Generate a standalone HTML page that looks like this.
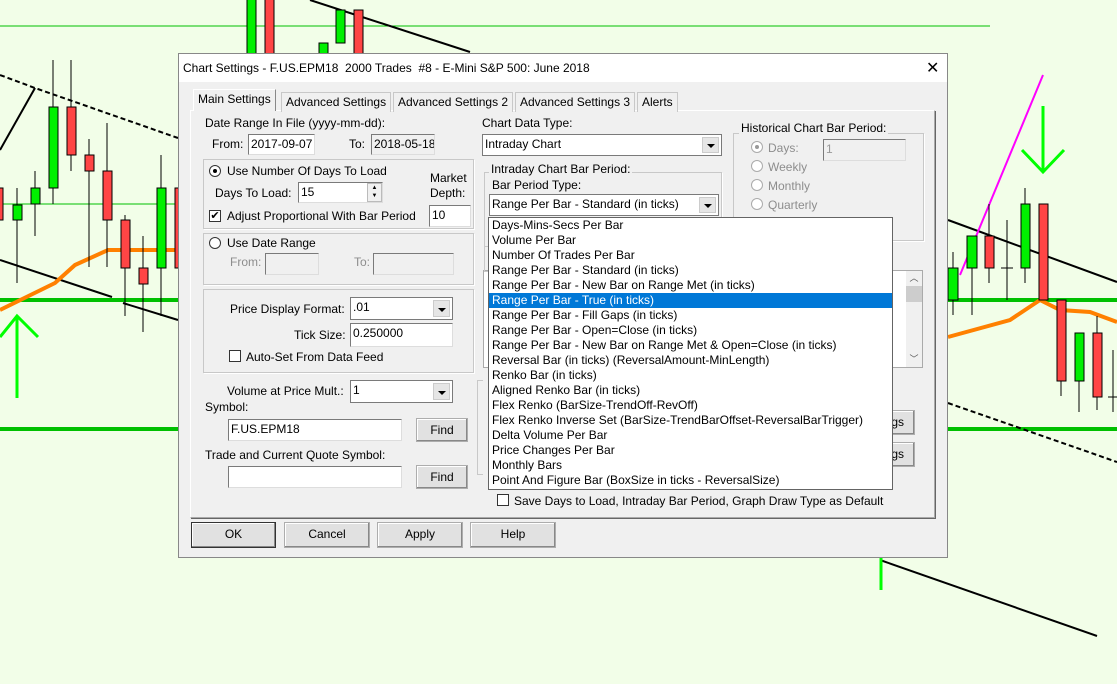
<!DOCTYPE html>
<html><head><meta charset="utf-8"><style>
*{box-sizing:border-box;margin:0;padding:0}
body{width:1117px;height:684px;overflow:hidden;background:#f2fee8;font-family:"Liberation Sans",sans-serif;font-size:12px;color:#000;position:relative}
.a{position:absolute;white-space:nowrap}
.dlg{position:absolute;left:178px;top:53px;width:770px;height:505px;background:#f0f0f0;border:1px solid #888}
.tb{position:absolute;left:0;top:0;width:768px;height:28px;background:#fff}
.in{position:absolute;background:#fff;border:1px solid #7a7a7a;border-right-color:#ddd;border-bottom-color:#ddd;padding:2px 2px;line-height:15px;white-space:nowrap;overflow:hidden}
.gr{background:#f0f0f0}
.grp{position:absolute;border:1px solid #c8c8c8;box-shadow:1px 1px 0 #fff}
.btn{position:absolute;background:#e1e1e1;border:1px solid #adadad;box-shadow:inset -1px -1px 0 #888, inset 1px 1px 0 #fff;text-align:center;line-height:22px}
.sel{position:absolute;background:#fff;border:1px solid #7a7a7a;padding:2px;line-height:15px;white-space:nowrap}
.sel:after{content:"";position:absolute;right:2px;top:2px;width:15px;bottom:2px;background:#e6e6e6;border:1px solid #ccc}
.sel i{position:absolute;right:6px;top:50%;margin-top:-1px;border:4px solid transparent;border-top:4px solid #000;z-index:2}
.rad{position:absolute;width:12px;height:12px;border-radius:50%;border:1px solid #333;background:#fff}
.cb{position:absolute;width:12px;height:12px;border:1px solid #333;background:#fff;font-size:11px;line-height:10px;text-align:center}
.dis{color:#8d8d8d}
.tab{position:absolute;border:1px solid #c8c8c8;border-bottom:none;height:20px;line-height:19px;padding:0 4px;background:#f0f0f0;white-space:nowrap}
.list{position:absolute;left:488px;top:217px;width:405px;height:273px;background:#fff;border:1px solid #646464}
.list div{height:15px;line-height:15px;padding-left:3px;white-space:nowrap}
.list .s{background:#0078d7;color:#fff}
</style></head><body>
<svg class="a" style="left:0;top:0" width="1117" height="684">
<g stroke="#00c000" fill="none">
<line x1="0" y1="26" x2="990" y2="26" stroke-width="1"/>
<line x1="0" y1="204" x2="180" y2="204" stroke-width="1"/>
<line x1="0" y1="300" x2="1117" y2="300" stroke-width="4"/>
<line x1="0" y1="429" x2="180" y2="429" stroke-width="4"/>
<line x1="848" y1="429" x2="1117" y2="429" stroke-width="4"/>
</g>
<g stroke="#000" stroke-width="2" fill="none">
<polyline points="0,150 35,88"/>
<polyline points="0,75 35,88 178,138" stroke-dasharray="5,3"/>
<line x1="0" y1="260" x2="112" y2="297"/>
<line x1="123" y1="303" x2="178" y2="320"/>
<line x1="310" y1="0" x2="470" y2="52"/>
<line x1="948" y1="220" x2="1117" y2="282"/>
<line x1="948" y1="403" x2="1117" y2="462" stroke-dasharray="5,3"/>
<line x1="880" y1="560" x2="1097" y2="636"/>
</g>
<line x1="960" y1="275" x2="1043" y2="75" stroke="#f0f" stroke-width="2"/>
<polyline points="0,310 55,283 75,265 108,250 178,250" stroke="#ff8000" stroke-width="4" fill="none"/>
<polyline points="948,337 1010,320 1040,300 1060,310 1090,312 1117,322" stroke="#ff8000" stroke-width="4" fill="none"/>
<g stroke="#00ff00" stroke-width="3" fill="none">
<polyline points="0,337 17,316 38,337"/><line x1="17" y1="316" x2="17" y2="398"/>
<polyline points="1022,150 1043,172 1064,150"/><line x1="1043" y1="106" x2="1043" y2="172"/>
<line x1="881" y1="558" x2="881" y2="590"/>
</g>
<g stroke="#000" stroke-width="1">
<line x1="17" y1="188" x2="17" y2="283"/><line x1="35" y1="171" x2="35" y2="236"/><line x1="53" y1="60" x2="53" y2="204"/><line x1="71" y1="60" x2="71" y2="171"/><line x1="89" y1="139" x2="89" y2="267"/><line x1="107" y1="123" x2="107" y2="267"/><line x1="125" y1="215" x2="125" y2="316"/><line x1="143" y1="236" x2="143" y2="332"/><line x1="161" y1="155" x2="161" y2="316"/>
<line x1="953" y1="252" x2="953" y2="315"/><line x1="972" y1="236" x2="972" y2="315"/><line x1="989" y1="204" x2="989" y2="283"/><line x1="1007" y1="220" x2="1007" y2="300"/><line x1="1001" y1="268" x2="1013" y2="268"/><line x1="1025" y1="188" x2="1025" y2="283"/><line x1="1061" y1="300" x2="1061" y2="396"/><line x1="1079" y1="333" x2="1079" y2="412"/><line x1="1097" y1="316" x2="1097" y2="410"/><line x1="1113" y1="350" x2="1113" y2="412"/><line x1="1108" y1="397" x2="1117" y2="397"/>
</g>
<g stroke="#000" stroke-width="1">
<rect x="-2" y="188" width="5" height="32" fill="#ff4545"/>
<rect x="13" y="205" width="9" height="15" fill="#00f000"/>
<rect x="31" y="188" width="9" height="16" fill="#00f000"/>
<rect x="49" y="107" width="9" height="81" fill="#00f000"/>
<rect x="67" y="107" width="9" height="48" fill="#ff4545"/>
<rect x="85" y="155" width="9" height="16" fill="#ff4545"/>
<rect x="103" y="171" width="9" height="49" fill="#ff4545"/>
<rect x="121" y="220" width="9" height="48" fill="#ff4545"/>
<rect x="139" y="268" width="9" height="16" fill="#ff4545"/>
<rect x="157" y="188" width="9" height="80" fill="#00f000"/>
<rect x="175" y="188" width="9" height="80" fill="#ff4545"/>
<rect x="247" y="-2" width="9" height="57" fill="#00f000"/>
<rect x="265" y="-2" width="9" height="57" fill="#ff4545"/>
<rect x="319" y="43" width="9" height="17" fill="#00f000"/>
<rect x="336" y="10" width="9" height="33" fill="#00f000"/>
<rect x="354" y="10" width="9" height="45" fill="#ff4545"/>
<rect x="948" y="268" width="10" height="32" fill="#00f000"/>
<rect x="967" y="236" width="10" height="32" fill="#00f000"/>
<rect x="985" y="236" width="9" height="32" fill="#ff4545"/>
<rect x="1021" y="204" width="9" height="64" fill="#00f000"/>
<rect x="1039" y="204" width="9" height="96" fill="#ff4545"/>
<rect x="1057" y="300" width="9" height="81" fill="#ff4545"/>
<rect x="1075" y="333" width="9" height="48" fill="#00f000"/>
<rect x="1093" y="333" width="9" height="64" fill="#ff4545"/>
</g>
</svg>

<div class="dlg">
<div class="tb"></div>
<div class="a" style="left:4px;top:7px">Chart Settings - F.US.EPM18&nbsp; 2000 Trades&nbsp; #8 - E-Mini S&amp;P 500: June 2018</div>
<div class="a" style="left:747px;top:4px;font-size:16px">✕</div>
</div>
<div class="a" style="left:190px;top:110px;width:745px;height:408px;border:1px solid #aaa;border-top-color:#fff;border-left-color:#fff;box-shadow:1px 1px 0 #666"></div>
<div class="tab" style="left:193px;top:89px;height:22px;z-index:2;border-color:#fff #888 #f0f0f0 #fff;border-width:1px">Main Settings</div>
<div class="tab" style="left:281px;top:92px">Advanced Settings</div>
<div class="tab" style="left:393px;top:92px">Advanced Settings 2</div>
<div class="tab" style="left:515px;top:92px">Advanced Settings 3</div>
<div class="tab" style="left:637px;top:92px">Alerts</div>

<div class="a" style="left:205px;top:116px">Date Range In File (yyyy-mm-dd):</div>
<div class="a" style="left:212px;top:137px">From:</div>
<div class="in" style="left:248px;top:134px;width:67px;height:21px">2017-09-07</div>
<div class="a" style="left:349px;top:137px">To:</div>
<div class="in gr" style="left:371px;top:134px;width:64px;height:21px">2018-05-18</div>

<div class="grp" style="left:203px;top:159px;width:271px;height:70px"></div>
<div class="rad" style="left:209px;top:165px"><div style="width:4px;height:4px;background:#000;border-radius:50%;margin:3px"></div></div>
<div class="a" style="left:227px;top:164px">Use Number Of Days To Load</div>
<div class="a" style="left:215px;top:186px">Days To Load:</div>
<div class="in" style="left:298px;top:182px;width:85px;height:21px">15</div>
<div class="a" style="left:367px;top:183px;width:15px;height:19px;background:#f0f0f0;border:1px solid #bbb;font-size:6px;text-align:center;line-height:8px">▲<br>▼</div>
<div class="a" style="left:430px;top:171px">Market</div>
<div class="a" style="left:430px;top:186px">Depth:</div>
<div class="in" style="left:429px;top:205px;width:42px;height:22px">10</div>
<div class="cb" style="left:209px;top:210px">✔</div>
<div class="a" style="left:227px;top:209px">Adjust Proportional With Bar Period</div>

<div class="grp" style="left:203px;top:233px;width:271px;height:52px"></div>
<div class="rad" style="left:209px;top:237px"></div>
<div class="a" style="left:227px;top:236px">Use Date Range</div>
<div class="a dis" style="left:230px;top:255px">From:</div>
<div class="in gr" style="left:265px;top:253px;width:54px;height:22px"></div>
<div class="a dis" style="left:354px;top:255px">To:</div>
<div class="in gr" style="left:373px;top:253px;width:81px;height:22px"></div>

<div class="grp" style="left:203px;top:289px;width:271px;height:84px"></div>
<div class="a" style="left:230px;top:302px">Price Display Format:</div>
<div class="sel" style="left:350px;top:297px;width:103px;height:23px">.01<i></i></div>
<div class="a" style="left:294px;top:328px">Tick Size:</div>
<div class="in" style="left:350px;top:323px;width:103px;height:24px">0.250000</div>
<div class="cb" style="left:229px;top:350px"></div>
<div class="a" style="left:246px;top:350px">Auto-Set From Data Feed</div>

<div class="a" style="left:227px;top:384px">Volume at Price Mult.:</div>
<div class="sel" style="left:350px;top:380px;width:103px;height:23px">1<i></i></div>
<div class="a" style="left:205px;top:400px">Symbol:</div>
<div class="in" style="left:228px;top:419px;width:174px;height:22px">F.US.EPM18</div>
<div class="btn" style="left:416px;top:418px;width:52px;height:24px">Find</div>
<div class="a" style="left:205px;top:448px">Trade and Current Quote Symbol:</div>
<div class="in" style="left:228px;top:466px;width:174px;height:22px"></div>
<div class="btn" style="left:416px;top:465px;width:52px;height:24px">Find</div>

<div class="a" style="left:482px;top:116px">Chart Data Type:</div>
<div class="sel" style="left:482px;top:134px;width:240px;height:22px">Intraday Chart<i></i></div>
<div class="grp" style="left:484px;top:172px;width:238px;height:101px"></div>
<div class="a" style="left:489px;top:162px;background:#f0f0f0;padding:0 2px">Intraday Chart Bar Period:</div>
<div class="a" style="left:492px;top:178px">Bar Period Type:</div>
<div class="sel" style="left:489px;top:194px;width:230px;height:22px">Range Per Bar - Standard (in ticks)<i></i></div>

<div class="grp" style="left:733px;top:133px;width:191px;height:108px"></div>
<div class="a" style="left:739px;top:121px;background:#f0f0f0;padding:0 2px">Historical Chart Bar Period:</div>
<div class="rad" style="left:751px;top:141px;border-color:#aaa"><div style="width:4px;height:4px;background:#999;border-radius:50%;margin:3px"></div></div>
<div class="a dis" style="left:768px;top:141px">Days:</div>
<div class="in gr" style="left:823px;top:139px;width:83px;height:22px;color:#999">1</div>
<div class="rad" style="left:751px;top:160px;border-color:#aaa"></div><div class="a dis" style="left:768px;top:160px">Weekly</div>
<div class="rad" style="left:751px;top:179px;border-color:#aaa"></div><div class="a dis" style="left:768px;top:179px">Monthly</div>
<div class="rad" style="left:751px;top:198px;border-color:#aaa"></div><div class="a dis" style="left:768px;top:198px">Quarterly</div>

<div class="a" style="left:483px;top:270px;width:440px;height:98px;background:#fff;border:1px solid #aaa"></div>
<div class="a" style="left:906px;top:271px;width:16px;height:96px;background:#f0f0f0;font-size:9px;text-align:center;color:#555">︿<div style="height:16px;background:#cdcdcd;margin-top:2px"></div><div style="margin-top:50px">﹀</div></div>
<div class="grp" style="left:484px;top:246px;width:12px;height:26px"></div>
<div class="btn" style="left:860px;top:410px;width:55px;height:25px;text-align:right;padding-right:10px">gs</div>
<div class="btn" style="left:860px;top:442px;width:55px;height:25px;text-align:right;padding-right:10px">gs</div>
<div class="a" style="left:477px;top:380px;width:6px;height:95px;border:1px solid #c8c8c8;border-right:none"></div>

<div class="list">
<div>Days-Mins-Secs Per Bar</div><div>Volume Per Bar</div><div>Number Of Trades Per Bar</div><div>Range Per Bar - Standard (in ticks)</div><div>Range Per Bar - New Bar on Range Met (in ticks)</div><div class="s">Range Per Bar - True (in ticks)</div><div>Range Per Bar - Fill Gaps (in ticks)</div><div>Range Per Bar - Open=Close (in ticks)</div><div>Range Per Bar - New Bar on Range Met &amp; Open=Close (in ticks)</div><div>Reversal Bar (in ticks) (ReversalAmount-MinLength)</div><div>Renko Bar (in ticks)</div><div>Aligned Renko Bar (in ticks)</div><div>Flex Renko (BarSize-TrendOff-RevOff)</div><div>Flex Renko Inverse Set (BarSize-TrendBarOffset-ReversalBarTrigger)</div><div>Delta Volume Per Bar</div><div>Price Changes Per Bar</div><div>Monthly Bars</div><div>Point And Figure Bar (BoxSize in ticks - ReversalSize)</div>
</div>

<div class="cb" style="left:497px;top:494px"></div>
<div class="a" style="left:514px;top:494px">Save Days to Load, Intraday Bar Period, Graph Draw Type as Default</div>

<div class="btn" style="left:191px;top:522px;width:85px;height:26px;border-color:#333">OK</div>
<div class="btn" style="left:284px;top:522px;width:86px;height:26px">Cancel</div>
<div class="btn" style="left:377px;top:522px;width:86px;height:26px">Apply</div>
<div class="btn" style="left:470px;top:522px;width:86px;height:26px">Help</div>
</body></html>
